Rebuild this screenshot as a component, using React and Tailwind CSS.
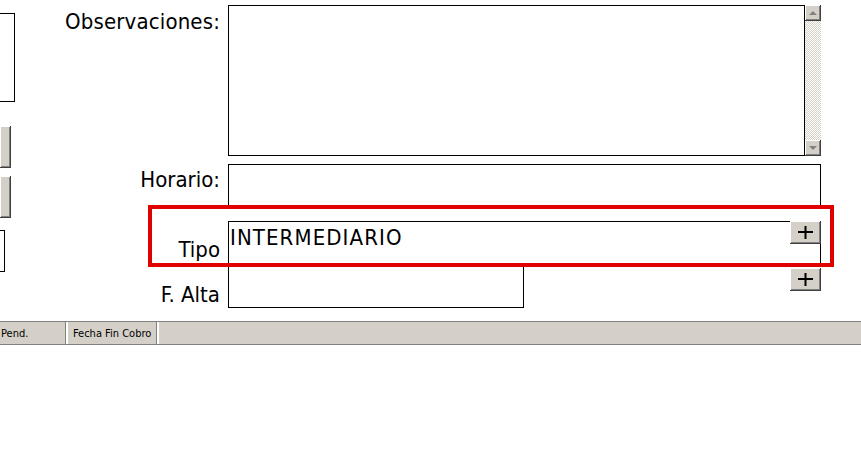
const bevel = 'bg-[#d4d0c8] shadow-[inset_-1px_-1px_#404040,inset_1px_1px_#ffffff,inset_-2px_-2px_#808080]'

function PlusButton({ className = '' }) {
  return (
    <button className={`w-[31px] h-[23px] flex items-center justify-center ${bevel} ${className}`}>
      <svg width="15" height="13" viewBox="0 0 15 13">
        <rect x="0" y="5" width="15" height="2" fill="#000" />
        <rect x="6.5" y="0" width="2" height="13" fill="#000" />
      </svg>
    </button>
  )
}

function Arrow({ down }) {
  return (
    <div className={`w-[16px] h-[16px] flex items-center justify-center ${bevel}`}>
      <svg width="8" height="4" viewBox="0 0 8 4">
        <polygon points={down ? '0,0 8,0 4,4' : '0,4 8,4 4,0'} fill="#808080" />
      </svg>
    </div>
  )
}

export default function App() {
  return (
    <div className="relative w-[861px] h-[451px] overflow-hidden bg-white text-black font-['Tahoma','DejaVu_Sans_Condensed','DejaVu_Sans',sans-serif]">
      <div className="flex h-[321px]">
        {/* columna izquierda recortada */}
        <div className="w-[15px] shrink-0 flex flex-col">
          <div className="mt-[13px] h-[89px] border-y border-r border-black" />
          <div className={`mt-[24px] h-[42px] w-[11px] ${bevel}`} />
          <div className={`mt-[8px] h-[42px] w-[11px] ${bevel}`} />
          <div className="mt-[12px] h-[42px] w-[5px] border-y border-r border-black" />
        </div>

        {/* formulario */}
        <div className="flex flex-col pt-[5px]">
          <div className="flex">
            <label className="w-[205px] text-right text-[22px] leading-none pt-[6px] tracking-[0.15px]">Observaciones:</label>
            <div className="ml-[8px] flex">
              <div className="w-[577px] h-[151px] border border-black" />
              <div className="w-[16px] h-[151px] flex flex-col bg-[repeating-conic-gradient(#d4d0c8_0_25%,#ffffff_0_50%)] bg-[length:2px_2px]">
                <Arrow />
                <div className="flex-1" />
                <Arrow down />
              </div>
            </div>
          </div>

          <div className="flex mt-[8px]">
            <label className="w-[205px] text-right text-[22px] leading-none pt-[5px]">Horario:</label>
            <div className="ml-[8px] w-[593px] h-[43px] border border-black" />
          </div>

          <div className="flex mt-[14px]">
            <label className="w-[205px] text-right text-[22px] leading-none flex items-end justify-end pb-[3px]">Tipo</label>
            <div className="ml-[8px] w-[593px] h-[43px] border border-black flex justify-between">
              <span className="text-[22px] leading-none pl-[1px] pt-[5px] tracking-[1.1px]">INTERMEDIARIO</span>
              <PlusButton className="-mt-px -mr-px" />
            </div>
          </div>

          <div className="flex mt-[1px]">
            <label className="w-[205px] text-right text-[22px] leading-none pt-[19px]">F. Alta</label>
            <div className="ml-[8px] w-[296px] h-[43px] border border-black" />
            <PlusButton className="ml-[266px] mt-[3px]" />
          </div>
        </div>
      </div>

      {/* barra de estado */}
      <div className="h-[24px] bg-[#d4d0c8] border-t border-b border-[#808080] flex text-[11px] leading-none">
        <div className="w-[66px] flex items-center pl-[1px] border-r border-[#808080] shadow-[1px_0_#ffffff]">Pend.</div>
        <div className="w-[90px] flex items-center pl-[5px] ml-px border-r border-[#808080] shadow-[1px_0_#ffffff] border-l border-l-white">Fecha Fin Cobro</div>
        <div className="flex-1 ml-px border-l border-l-white" />
      </div>

      {/* marco rojo de resaltado */}
      <div className="absolute left-[148px] top-[205px] w-[686px] h-[62px] border-4 border-[#e00000] pointer-events-none" />
    </div>
  )
}
